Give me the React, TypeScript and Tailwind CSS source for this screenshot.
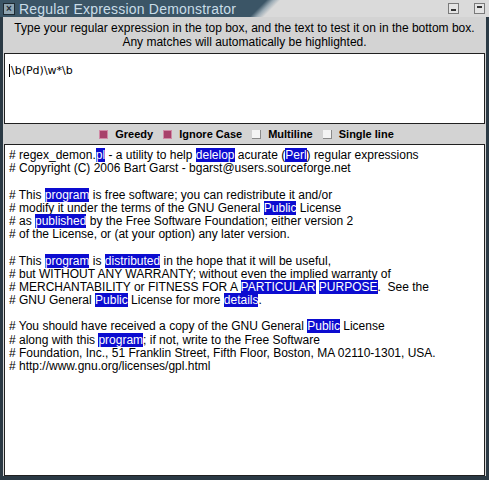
import React from 'react'

type Seg = string | { hl: string }

// 正文行，{hl} 为高亮匹配
const lines: Seg[][] = [
  ['# regex_demon.', { hl: 'pl' }, ' - a utility to help ', { hl: 'delelop' }, ' acurate (', { hl: 'Perl' }, ') regular expressions'],
  ['# Copyright (C) 2006 Bart Garst - bgarst@users.sourceforge.net'],
  [],
  ['# This ', { hl: 'program' }, ' is free software; you can redistribute it and/or'],
  ['# modify it under the terms of the GNU General ', { hl: 'Public' }, ' License'],
  ['# as ', { hl: 'published' }, ' by the Free Software Foundation; either version 2'],
  ['# of the License, or (at your option) any later version.'],
  [],
  ['# This ', { hl: 'program' }, ' is ', { hl: 'distributed' }, ' in the hope that it will be useful,'],
  ['# but WITHOUT ANY WARRANTY; without even the implied warranty of'],
  ['# MERCHANTABILITY or FITNESS FOR A ', { hl: 'PARTICULAR' }, ' ', { hl: 'PURPOSE' }, '.  See the'],
  ['# GNU General ', { hl: 'Public' }, ' License for more ', { hl: 'details' }, '.'],
  [],
  ['# You should have received a copy of the GNU General ', { hl: 'Public' }, ' License'],
  ['# along with this ', { hl: 'program' }, '; if not, write to the Free Software'],
  ['# Foundation, Inc., 51 Franklin Street, Fifth Floor, Boston, MA 02110-1301, USA.'],
  ['# http://www.gnu.org/licenses/gpl.html'],
]

function Check({ on, label }: { on: boolean; label: string }) {
  return (
    <div className="flex items-center gap-[7px]">
      {on ? (
        <span className="w-[9px] h-[9px] bg-[#a8406a] border border-[#d08aa6]" />
      ) : (
        <span className="w-[9px] h-[9px] bg-[#f4f4f4] border-r border-b border-[#8a8a8a]" />
      )}
      <span className="font-bold">{label}</span>
    </div>
  )
}

export default function App() {
  return (
    <div
      className="w-[489px] h-[480px] flex flex-col bg-[#2a3944] overflow-hidden text-black"
      style={{ fontFamily: '"Liberation Sans", Arial, sans-serif' }}
    >
      {/* 标题栏 */}
      <div className="h-[17px] flex items-stretch bg-[#dadada]">
        <div className="w-[250px] flex items-center gap-[4px] pl-[3px] bg-[#3b5566] text-[#c9dde8] text-[14px] leading-none">
          <span className="w-[12px] h-[12px] bg-[#8fa5b2] border border-[#1e2a32] flex items-center justify-center text-[10px] text-[#1e2a32] font-bold">
            ×
          </span>
          <span className="tracking-[0.2px]">Regular Expression Demonstrator</span>
        </div>
        <div className="w-[30px] flex flex-col">
          <div className="flex-1 bg-[linear-gradient(135deg,#3b5566_35%,#9aaab4_50%,#dadada_65%)]" />
        </div>
        <div className="flex-1" />
        <div className="flex items-center gap-[15px] pr-[4px]">
          <span className="w-[11px] h-[11px] bg-[#e4e4e4] border border-[#7a7a7a] flex items-end justify-center pb-[2px]">
            <span className="w-[5px] h-[2px] bg-[#333]" />
          </span>
          <span className="w-[11px] h-[11px] bg-[#e4e4e4] border border-[#7a7a7a] flex items-start justify-center pt-[2px]">
            <span className="w-[5px] h-[2px] bg-[#333]" />
          </span>
        </div>
      </div>

      {/* 窗体 */}
      <div className="flex-1 flex flex-col bg-[#d3d3d3] mx-[3px] mb-[4px]">
        <div className="text-center text-[12px] leading-[14px] pt-[4px] pb-[4px]">
          <div>Type your regular expression in the top box, and the text to test it on in the bottom box.</div>
          <div>Any matches will automatically be highlighted.</div>
        </div>

        <div className="h-[71px] bg-white border border-[#202020] mx-[1px] px-[4px] pt-[3px]">
          <span
            className="text-[11px] border-l border-black pl-[1px]"
            style={{ fontFamily: '"DejaVu Sans", sans-serif' }}
          >
            \b(Pd)\w*\b
          </span>
        </div>

        <div className="h-[20px] flex items-center justify-center gap-[10px] text-[11px] pl-[4px]">
          <Check on label="Greedy" />
          <Check on label="Ignore Case" />
          <Check on={false} label="Multiline" />
          <Check on={false} label="Single line" />
        </div>

        <div className="flex-1 bg-white border border-[#202020] mx-[1px] px-[4px] pt-[4px] text-[12px] leading-[13.2px]">
          {lines.map((segs, i) => (
            <div key={i} className="h-[13.2px] whitespace-pre">
              {segs.map((s, j) =>
                typeof s === 'string' ? (
                  <span key={j}>{s}</span>
                ) : (
                  <span key={j} className="bg-[#0c0cd0] text-white">
                    {s.hl}
                  </span>
                )
              )}
            </div>
          ))}
        </div>
      </div>
    </div>
  )
}
